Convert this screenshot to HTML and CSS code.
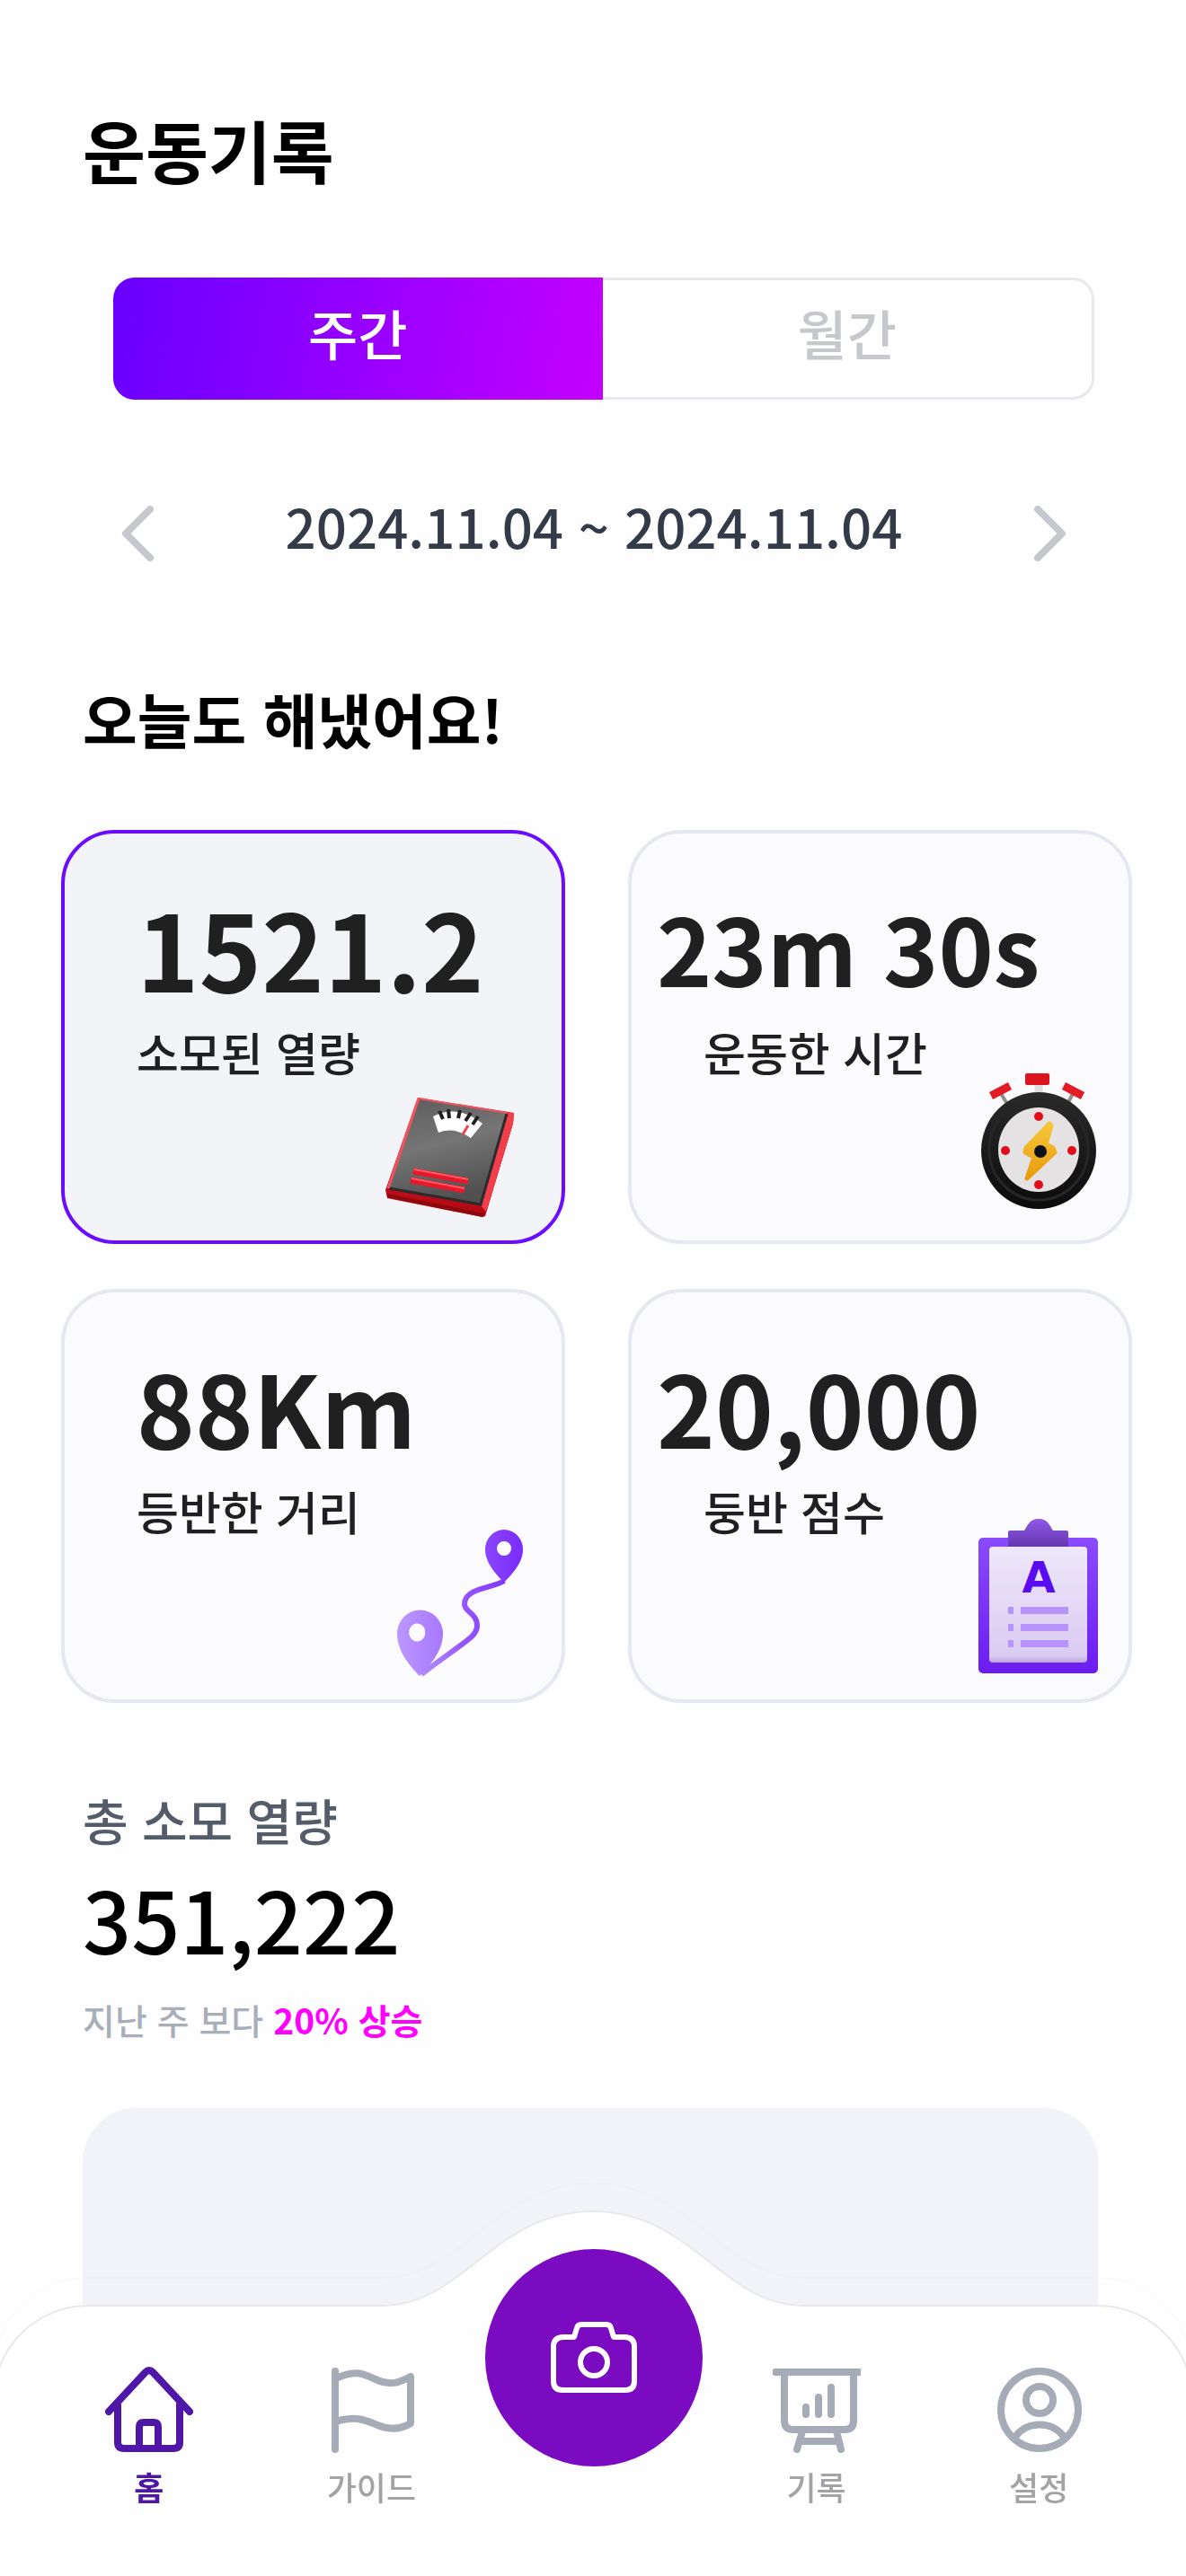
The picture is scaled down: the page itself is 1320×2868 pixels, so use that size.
FILE: index.html
```html
<!DOCTYPE html>
<html lang="ko">
<head>
<meta charset="utf-8">
<meta name="viewport" content="width=device-width, initial-scale=1">
<title>운동기록</title>
<link rel="stylesheet" href="styles.css">
</head>
<body>
<main class="page">
  <h1 class="page-title">운동기록</h1>

  <div class="tabs">
    <button class="tab tab-active" type="button">주간</button>
    <button class="tab" type="button">월간</button>
  </div>

  <div class="period">
    <button class="period-step" type="button" aria-label="이전">
      <svg class="chevron" viewBox="0 0 36 62"><path d="M32 4 5 31l27 27"/></svg>
    </button>
    <p class="period-range">2024.11.04 ~ 2024.11.04</p>
    <button class="period-step" type="button" aria-label="다음">
      <svg class="chevron" viewBox="0 0 36 62"><path d="M4 4l27 27L4 58"/></svg>
    </button>
  </div>

  <h2 class="section-title">오늘도 해냈어요!</h2>

  <section class="stats">
    <article class="card card-selected">
      <div class="card-text">
        <p class="value value-xl">1521.2</p>
        <p class="label">소모된 열량</p>
      </div>
      <svg class="card-icon" viewBox="0 0 170 180">
        <defs>
          <linearGradient id="scale-top" x1="0" y1="0" x2="0.3" y2="1"><stop offset="0" stop-color="#5c5c5c"/><stop offset=".5" stop-color="#757575"/><stop offset="1" stop-color="#505050"/></linearGradient>
          <linearGradient id="scale-front" x1="0" y1="0" x2="0" y2="1"><stop offset="0" stop-color="#ee1c2c"/><stop offset="1" stop-color="#b00812"/></linearGradient>
        </defs>
        <path d="M42 45 149 62 148 74 117 177 114 178 8 157 6 148Z" fill="url(#scale-front)"/>
        <path d="M141 62 149 62 148 74 118 172 112 165Z" fill="#f23d4b"/>
        <path d="M8 156 114 178 116 174 8 152Z" fill="#8a0a10"/>
        <path d="M44 47 141 62 112 165 10 146Z" fill="url(#scale-top)"/>
        <path d="M141 63 112 164 10 146" fill="none" stroke="#2b2b2b" stroke-width="3"/>
        <path d="M43 46 141 62" stroke="#f2545f" stroke-width="2"/>
        <path d="M43 46 9 146" stroke="#f2545f" stroke-width="3"/>
        <path d="M59 66Q87 52 114 74L101 90Q83 77 65 84Z" fill="#fff"/>
        <path d="M66 60 70 69M76 58 77 68M89 59 87 68M101 62 95 71M109 66 103 75" stroke="#1f1f1f" stroke-width="4"/>
        <path d="M98 76 92 86" stroke="#f04450" stroke-width="3"/>
        <path d="M37 127 98 138M34 137 94 148" stroke="#e8172a" stroke-width="7"/>
        <path d="M38 125 98 136M35 135 94 146" stroke="#ff5a63" stroke-width="2"/>
      </svg>
    </article>

    <article class="card card-right">
      <div class="card-text">
        <p class="value value-md">23m 30s</p>
        <p class="label">운동한 시간</p>
      </div>
      <svg class="card-icon" viewBox="0 0 170 180">
        <defs>
          <linearGradient id="bolt" x1="0" y1="0" x2="0" y2="1"><stop offset="0" stop-color="#f7c73b"/><stop offset="1" stop-color="#e89b0c"/></linearGradient>
          <linearGradient id="rim" x1="0" y1="0" x2="0" y2="1"><stop offset="0" stop-color="#2a2a2a"/><stop offset="1" stop-color="#0b0b0b"/></linearGradient>
        </defs>
        <path d="M102 28V44" stroke="#dedede" stroke-width="9"/>
        <path d="M59 39 67 52M141 39 134 52" stroke="#8d8d8d" stroke-width="4"/>
        <rect x="87" y="18" width="27" height="13" rx="2" fill="#dc1420"/>
        <path d="M49 43 70 32M130 32 151 43" stroke="#e31b26" stroke-width="9"/>
        <ellipse cx="102" cy="104" rx="64" ry="65" fill="url(#rim)"/>
        <ellipse cx="102" cy="103" rx="55" ry="56" fill="none" stroke="#262626" stroke-width="3"/>
        <ellipse cx="102" cy="103" rx="45" ry="47" fill="#e4e2e3"/>
        <circle cx="102" cy="66" r="5" fill="#e00e1a"/><circle cx="102" cy="142" r="5" fill="#e00e1a"/>
        <circle cx="65" cy="104" r="5" fill="#e00e1a"/><circle cx="139" cy="104" r="5" fill="#e00e1a"/>
        <path d="M114 74 88 101 87 106 97 111 89 135 120 106 118 101 110 97 116 76Z" fill="url(#bolt)" stroke="url(#bolt)" stroke-width="5" stroke-linejoin="round"/>
        <circle cx="104" cy="105" r="7" fill="#0b1119"/>
      </svg>
    </article>

    <article class="card">
      <div class="card-text">
        <p class="value value-lg">88Km</p>
        <p class="label">등반한 거리</p>
      </div>
      <svg class="card-icon" viewBox="0 0 170 180">
        <defs>
          <linearGradient id="route" gradientUnits="userSpaceOnUse" x1="19" y1="0" x2="159" y2="0"><stop offset="0" stop-color="#bb98ff"/><stop offset=".35" stop-color="#a878ff"/><stop offset=".5" stop-color="#9659ff"/><stop offset="1" stop-color="#7a2bfa"/></linearGradient>
        </defs>
        <path d="M138 72C128 80 94 79 94 98 94 107 108 108 108 122 108 134 96 138 46 176" fill="none" stroke="url(#route)" stroke-width="6"/>
        <path fill-rule="evenodd" fill="url(#route)" d="M138 74C132 67 117 54 117 37A21 22 0 0 1 159 37C159 54 144 67 138 74ZM138 28a8 8 0 1 0 0 16 8 8 0 0 0 0-16Z"/>
        <path fill-rule="evenodd" fill="url(#route)" d="M44 178C37 170 19 153 19 131A25 26 0 0 1 70 131C70 153 51 170 44 178ZM44 120a9 10 0 1 0 0 19 9 10 0 0 0 0-19Z"/>
      </svg>
    </article>

    <article class="card card-right">
      <div class="card-text">
        <p class="value value-lg">20,000</p>
        <p class="label">둥반 점수</p>
      </div>
      <svg class="card-icon" viewBox="0 0 170 180">
        <defs>
          <linearGradient id="board" x1="0" y1="0" x2="0" y2="1"><stop offset="0" stop-color="#8a4bff"/><stop offset="1" stop-color="#6c1cf0"/></linearGradient>
          <linearGradient id="paper" x1="0" y1="0" x2="0" y2="1"><stop offset="0" stop-color="#eee8fa"/><stop offset=".94" stop-color="#dacbf2"/><stop offset="1" stop-color="#bda5dd"/></linearGradient>
          <linearGradient id="clip" x1="0" y1="0" x2="0" y2="1"><stop offset="0" stop-color="#8f5ae6"/><stop offset="1" stop-color="#6636b0"/></linearGradient>
        </defs>
        <rect x="35" y="24" width="133" height="151" rx="5" fill="url(#board)"/>
        <rect x="47" y="34" width="109" height="129" rx="4" fill="url(#paper)"/>
        <path d="M68 34V18Q68 16 70 16H86C90 10 92 3 102 3S114 10 118 16H133Q135 16 135 18V34Z" fill="url(#clip)"/>
        <text class="grade" x="102" y="85">A</text>
        <path d="M68 105H74M82 105H135M68 124H74M82 124H135M68 142H74M82 142H135" stroke="#b793fb" stroke-width="8"/>
      </svg>
    </article>
  </section>

  <section class="total">
    <h2 class="total-label">총 소모 열량</h2>
    <p class="total-value">351,222</p>
    <p class="total-note">지난 주 보다 <strong class="rise">20% 상승</strong></p>
    <div class="chart"></div>
  </section>
</main>

<nav class="nav">
  <svg class="nav-shape" viewBox="0 0 1320 438" preserveAspectRatio="none">
    <path d="M-7 211A105 105 0 0 1 98 106H427C515 106 550 1 660 1S805 106 893 106H1222A105 105 0 0 1 1327 211" fill="none" stroke="#000" stroke-opacity=".01" stroke-width="2"/>
    <path d="M-7 440V242A105 105 0 0 1 98 137H427C515 137 550 32 660 32S805 137 893 137H1222A105 105 0 0 1 1327 242V440Z" fill="#fefefe" stroke="#e9e9ea" stroke-width="2"/>
  </svg>
  <a class="nav-item nav-current" href="#home">
    <svg class="nav-icon" viewBox="0 0 98 96"><path d="M4 50 45 6Q49 2 53 6L94 50M14 42V84Q14 91 21 91H76Q83 91 83 84V42M38 89V67Q38 62 43 62H54Q59 62 59 67V89"/></svg>
    <span>홈</span>
  </a>
  <a class="nav-item" href="#guide">
    <svg class="nav-icon" viewBox="0 0 98 96"><path d="M9 5V92M10 13C34 2 42 9 56 15S80 18 93 11V63C80 71 68 70 56 65S34 54 10 61"/></svg>
    <span>가이드</span>
  </a>
  <button class="camera-button" type="button" aria-label="카메라">
    <svg class="camera" viewBox="0 0 96 80"><path d="M14 17H26L29 7Q30 3 34 3H62Q66 3 67 7L70 17H82Q93 17 93 28V66Q93 76 83 76H13Q3 76 3 66V28Q3 17 14 17Z"/><circle cx="48" cy="45" r="15"/></svg>
  </button>
  <a class="nav-item" href="#records">
    <svg class="nav-icon" viewBox="0 0 98 96"><path d="M3 6H98M13 6V60Q13 70 23 70H80Q90 70 90 60V6M33 72 27 92M71 72 76 92M31 83H73M37 45V53M51 34V53M65 23V53"/></svg>
    <span>기록</span>
  </a>
  <a class="nav-item" href="#settings">
    <svg class="nav-icon" viewBox="0 0 98 96"><circle cx="50" cy="48" r="43"/><circle cx="50" cy="37" r="15"/><path d="M23 78C35 60 65 60 77 78"/></svg>
    <span>설정</span>
  </a>
</nav>
</body>
</html>
```

FILE: styles.css
```css
* {
  box-sizing: border-box;
}

body,
h1,
h2,
p {
  margin: 0;
}

body {
  background: #fefefe;
  color: #000;
  font-family: "Noto Sans CJK KR", "Noto Sans", sans-serif;
}

button {
  padding: 0;
  border: 0;
  background: none;
  font-family: inherit;
  cursor: pointer;
}

svg {
  display: block;
}

.page {
  padding: 121px 60px 200px 68px;
}

.page-title {
  margin-left: 24px;
  font-size: 76px;
  line-height: 90px;
  font-weight: 700;
}

.tabs {
  display: flex;
  height: 136px;
  margin: 98px 42px 0 58px;
  border: 3px solid #e8e8ef;
  border-radius: 24px;
}

.tab {
  flex: 1;
  padding-bottom: 14px;
  color: #c6c8cc;
  font-size: 60px;
  line-height: 80px;
  font-weight: 500;
}

.tab-active {
  margin: -3px 0 -3px -3px;
  border-radius: 24px 0 0 24px;
  background: linear-gradient(100deg, #6800ff, #c400ff);
  color: #fff;
}

.period {
  display: flex;
  align-items: flex-end;
  justify-content: space-between;
  margin: 100px 73px 0 67px;
}

.chevron {
  width: 36px;
  height: 62px;
  fill: none;
  stroke: #c6c8ce;
  stroke-width: 8;
  stroke-linecap: round;
  stroke-linejoin: round;
}

.period-range {
  color: #333a48;
  font-size: 60px;
  line-height: 80px;
  font-weight: 500;
}

.section-title {
  margin: 134px 0 85px 24px;
  font-size: 66px;
  line-height: 80px;
  font-weight: 700;
}

.stats {
  display: grid;
  grid-template-columns: 1fr 1fr;
  gap: 50px 70px;
}

.card {
  display: grid;
  min-height: 461px;
  border: 4px solid #e6e8ef;
  border-radius: 60px;
  background: #fbfbfd;
  color: #202020;
}

.card-selected {
  border-color: #6c0cff;
  background: #f2f4f8;
}

.card-text {
  grid-area: 1 / 1;
  padding: 56px 0 0 80px;
}

.value {
  line-height: 140px;
  font-weight: 700;
  white-space: nowrap;
}

.value-xl {
  font-size: 118px;
}

.value-lg {
  font-size: 110px;
}

.value-md {
  font-size: 104px;
}

.card-right .value {
  margin-left: -52px;
}

.label {
  margin-top: 17px;
  font-size: 51px;
  line-height: 60px;
  font-weight: 500;
}

.card-icon {
  grid-area: 1 / 1;
  place-self: end;
  width: 170px;
  height: 180px;
  margin: 0 32px 24px 0;
}

.grade {
  fill: #5a0cf0;
  font-family: "DejaVu Sans", sans-serif;
  font-size: 48px;
  font-weight: 700;
  text-anchor: middle;
}

.total {
  margin: 94px 38px 0 24px;
}

.total-label {
  color: #545b69;
  font-size: 55px;
  line-height: 70px;
  font-weight: 500;
}

.total-value {
  margin-top: 15px;
  font-size: 95px;
  line-height: 120px;
  font-weight: 500;
}

.total-note {
  margin-top: 25px;
  color: #a9afb9;
  font-size: 39px;
  line-height: 56px;
  font-weight: 500;
}

.rise {
  color: #ff00ff;
  font-weight: 700;
}

.chart {
  height: 320px;
  margin-top: 71px;
  border-radius: 60px;
  background: #f2f3f8;
}

.nav {
  position: fixed;
  right: 0;
  bottom: 0;
  left: 0;
  display: grid;
  grid-template-columns: repeat(5, 1fr);
  height: 438px;
  padding: 0 40px 0 42px;
}

.nav-shape {
  position: absolute;
  inset: 0;
  width: 100%;
  height: 100%;
}

.nav-item {
  position: relative;
  display: flex;
  flex-direction: column;
  align-items: center;
  gap: 12px;
  padding-top: 205px;
  color: #a3a3a6;
  font-size: 36px;
  line-height: 50px;
  font-weight: 500;
  text-decoration: none;
}

.nav-icon {
  width: 98px;
  height: 96px;
  fill: none;
  stroke: #a5acb7;
  stroke-width: 8;
  stroke-linecap: round;
  stroke-linejoin: round;
}

.nav-current {
  color: #4f17a8;
  font-weight: 700;
}

.nav-current .nav-icon {
  stroke: #4f17a8;
}

.camera-button {
  position: relative;
  display: grid;
  place-items: center;
  justify-self: center;
  width: 242px;
  height: 242px;
  margin-top: 74px;
  border-radius: 50%;
  background: #7a0bc0;
}

.camera {
  width: 96px;
  height: 80px;
  fill: none;
  stroke: #fff;
  stroke-width: 6;
  stroke-linejoin: round;
}
```
